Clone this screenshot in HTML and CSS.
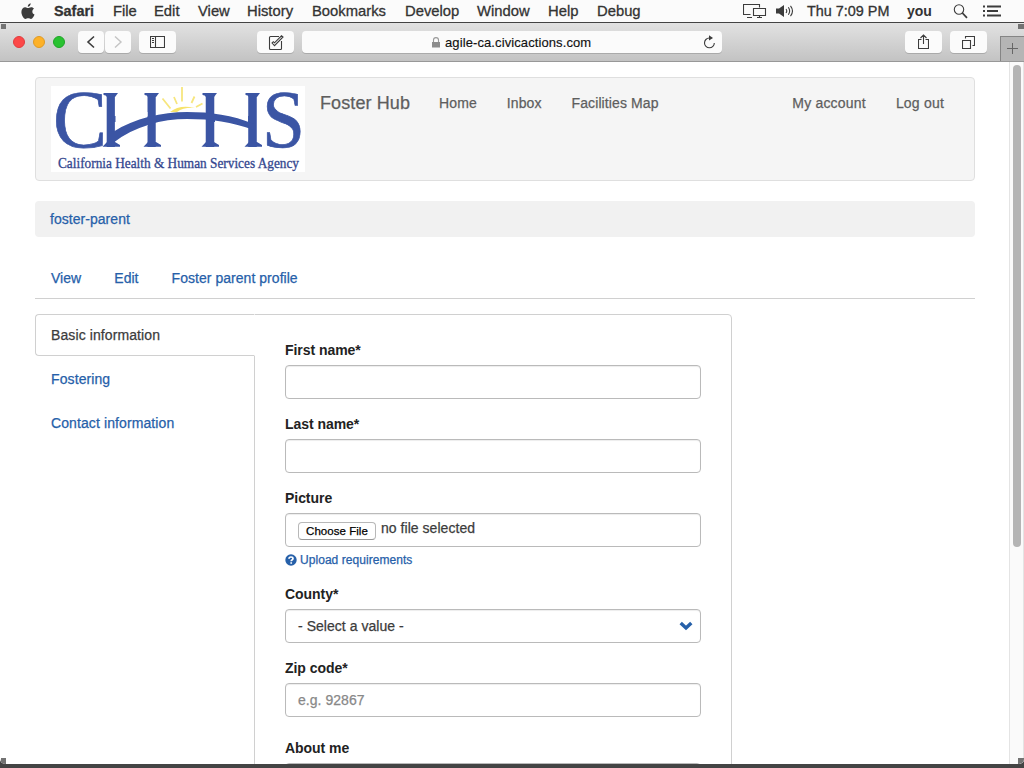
FILE: index.html
```html
<!DOCTYPE html>
<html lang="en">
<head>
<meta charset="utf-8">
<title>Foster Hub</title>
<link rel="stylesheet" href="styles.css">
</head>
<body>
<header class="menubar">
  <svg class="apple" width="14" height="17" viewBox="0 0 14 17"><path d="M9.7 0.3C9.8 2.2 8.300 3.700 6.800 3.700C6.600 2 8 .5 9.700 .3ZM7 5.100C7.700 5.100 8.600 4.200 10.200 4.200C11.500 4.200 12.500 4.900 13 5.700C10.600 7.100 10.900 10.500 13.500 11.500C12.900 13.200 11.500 15.900 10 15.900C8.900 15.900 8.500 15.300 7.200 15.300C5.900 15.300 5.400 15.900 4.400 15.900C2.600 15.900 .4 12.200 .4 9.100C.4 6 2.300 4.300 4.200 4.300C5.500 4.300 6.400 5.100 7 5.100Z"/></svg>
  <nav class="menus"><b>Safari</b><span>File</span><span>Edit</span><span>View</span><span>History</span><span>Bookmarks</span><span>Develop</span><span>Window</span><span>Help</span><span>Debug</span></nav>
  <div class="status">
    <svg class="screens" width="24" height="15" viewBox="0 0 24 15"><path d="M7.500 10.500H.5V.5H16.500V3.500M10.500 4.500H22.500V11.500H10.500ZM4 13.500H9M16.500 11.500V13.500M14 13.500H19"/></svg>
    <svg class="volume" width="18" height="14" viewBox="0 0 18 14"><path class="fill" d="M0 4.500H3L8 1V13L3 9.500H0Z"/><path d="M10 5Q11.500 7 10 9M12.300 3.300Q15 7 12.300 10.700M14.500 1.800Q18.500 7 14.500 12.200"/></svg>
    <span class="clock">Thu 7:09 PM</span>
    <b class="user">you</b>
    <svg class="search" width="15" height="15" viewBox="0 0 15 15"><circle cx="6" cy="5.500" r="4.700"/><path d="M9.400 9L14 13.800" stroke-width="1.800"/></svg>
    <svg class="list" width="18" height="12" viewBox="0 0 18 12"><path d="M0 1.500H2M4 1.500H18M0 6H2M4 6H15M0 10.500H2M4 10.500H18"/></svg>
  </div>
</header>
<div class="toolbar">
  <i class="light red"></i><i class="light amber"></i><i class="light green"></i>
  <span class="button nav-button back"><svg width="10" height="14" viewBox="0 0 10 14"><path d="M8 1.500L2 7L8 12.500"/></svg></span>
  <span class="button nav-button forward"><svg width="10" height="14" viewBox="0 0 10 14"><path d="M2 1.500L8 7L2 12.500"/></svg></span>
  <span class="button sidebar"><svg width="15" height="12" viewBox="0 0 15 12"><path d="M.5 .5H14.500V11.500H.5ZM5.500 .5V11.500M2 2.500H4M2 4.500H4M2 6.500H4"/></svg></span>
  <span class="button reader"><svg width="16" height="15" viewBox="0 0 16 15"><path d="M11 1.500H2.500Q1.500 1.500 1.500 2.500V13.500Q1.500 14.500 2.500 14.500H12.500Q13.500 14.500 13.500 13.500V6M4 8L6.500 10.700L15 2L13.500 .8L6.500 7.800L5.300 6.700Z"/></svg></span>
  <div class="address">
    <svg class="lock" width="8" height="11" viewBox="0 0 8 11"><path class="lock-body" d="M0 5H8V10.500H0Z"/><path class="shackle" d="M1.500 5V3Q1.500 .6 4 .6T6.500 3V5"/></svg>
    <span>agile-ca.civicactions.com</span>
    <svg class="reload" width="13" height="14" viewBox="0 0 13 14"><path d="M8.500 3H6.300A4.900 4.900 0 1 0 11.300 7.900"/><path d="M6 .3L10 3L6 5.500Z" class="fill"/></svg>
  </div>
  <span class="button share"><svg width="11" height="16" viewBox="0 0 11 16"><path d="M3.500 5.500H.5V14.500H10.500V5.500H7.500M5.500 10V1M2.500 4L5.500 1L8.500 4"/></svg></span>
  <span class="button tabs"><svg width="13" height="13" viewBox="0 0 13 13"><path d="M.5 4.500H8.500V12.500H.5ZM3.500 2.500V.5H12.500V9.500H10.500"/></svg></span>
  <span class="new-tab"><svg width="12" height="12" viewBox="0 0 12 12"><path d="M5.500 0V11M0 5.500H11"/></svg></span>
  <i class="corner top-left"></i><i class="corner top-right"></i>
</div>
<main class="viewport">
  <div class="page">
    <header class="navbar">
      <svg class="logo" width="254" height="86" viewBox="0 0 254 86">
        <rect width="254" height="86" fill="#fff"/>
        <g class="letters"><text x="2" y="60.500" textLength="54" lengthAdjust="spacingAndGlyphs">C</text><text class="pillars" x="48.500" y="60.700" textLength="63.400" lengthAdjust="spacingAndGlyphs">H</text><text class="pillars" x="147.300" y="60.700" textLength="66" lengthAdjust="spacingAndGlyphs">H</text><text x="211" y="60.500" textLength="43" lengthAdjust="spacingAndGlyphs">S</text></g>
        <path d="M64.500 26H96.500V40H64.500ZM164 26H197V40H164Z" fill="#fff"/>
        <g class="serifs">
          <path d="M52.500 7H67L64 11H56Q55 9 52.500 9ZM51.500 60.700L56 56H64L69 59V60.700Z"/>
          <path d="M93.500 7H108L105 11H97Q96 9 93.500 9ZM92.500 60.700L97 56H105L110 59V60.700Z"/>
          <path d="M151.500 7H166L163 11H155Q154 9 151.500 9ZM150.500 60.700L155 56H163L168 59V60.700Z"/>
          <path d="M194.500 7H209L206 11H198Q197 9 194.500 9ZM193.500 60.700L198 56H206L211 59V60.700Z"/>
        </g>
        <path d="M62 46C84 32 111 26 136 26C160 26 181 29 203 38V44C181 36 160 33 136 33C111 33 84 40 62 57Z" fill="#3b55a4"/>
        <path d="M119 26Q129 18 144 22Q133 21 126 26Z" fill="#f7e36b"/>
        <path d="M111.500 12.500L119.500 22.500M123 11L126 18M131 1V15.500M143.500 10.500L140.500 17M151.500 17.500L145 21" stroke="#f7e67e" stroke-width="1.800" fill="none"/>
        <text class="caption" x="7" y="82" textLength="241" lengthAdjust="spacingAndGlyphs">California Health &amp; Human Services Agency</text>
      </svg>
      <a class="brand">Foster Hub</a>
      <nav class="links"><a>Home</a><a>Inbox</a><a>Facilities Map</a></nav>
      <nav class="links account"><a>My account</a><a>Log out</a></nav>
    </header>
    <div class="breadcrumb"><a>foster-parent</a></div>
    <nav class="page-tabs"><a>View</a><a>Edit</a><a>Foster parent profile</a></nav>
    <div class="profile">
      <nav class="side-tabs"><a class="active">Basic information</a><a>Fostering</a><a>Contact information</a></nav>
      <form class="pane">
        <div class="field"><label>First name*</label><div class="control"></div></div>
        <div class="field"><label>Last name*</label><div class="control"></div></div>
        <div class="field"><label>Picture</label>
          <div class="control file"><span class="choose">Choose File</span><span class="file-name">no file selected</span></div>
          <a class="help"><svg width="12" height="12" viewBox="0 0 12 12"><circle cx="6" cy="6" r="5.700" fill="#2660a9"/><path d="M4 4.700Q4 3 6 3T8 4.600Q8 5.400 7 5.900Q6.200 6.300 6.200 7.300M6.200 8.300V9.800" stroke="#fff" stroke-width="1.700" fill="none"/></svg><span>Upload requirements</span></a>
        </div>
        <div class="field"><label>County*</label><div class="control select"><span>- Select a value -</span><svg width="14" height="10" viewBox="0 0 14 10"><path d="M1.700 2L7 7L12.300 2" stroke="#2660a9" stroke-width="3.400" fill="none"/></svg></div></div>
        <div class="field zip"><label>Zip code*</label><div class="control placeholder">e.g. 92867</div></div>
        <div class="field"><label>About me</label><div class="control area"></div></div>
      </form>
    </div>
  </div>
  <div class="scrollbar"><div class="thumb"></div></div>
  <i class="corner bottom-left"></i><i class="corner bottom-right"></i>
</main>
</body>
</html>
```

FILE: styles.css
```css
* { box-sizing: border-box; }
body {
  margin: 0;
  width: 1024px;
  height: 768px;
  overflow: hidden;
  display: flex;
  flex-direction: column;
  background: #444;
  font: 14px/20px "Liberation Sans", Arial, sans-serif;
  color: #3c3c3c;
}
svg { display: block; flex: none; }

.menubar {
  height: 23px;
  flex: none;
  display: flex;
  align-items: center;
  background: #fbfbfb;
  border-bottom: 1px solid #444;
  font-size: 14.8px;
  line-height: 22px;
  color: #333;
  -webkit-text-stroke: 0.3px;
}
.apple { margin-left: 21px; fill: #3c3c3c; }
.menus {
  margin-left: 19px;
  display: grid;
  grid-template-columns: 59px 41px 44px 49px 65px 93px 72px 71px 49px 50px;
}
.menus b { font-size: 14.4px; }
.status { margin-left: auto; display: flex; align-items: center; padding-right: 23px; }
.status svg, .toolbar svg { fill: none; stroke: #3c3c3c; stroke-width: 1.1; }
.status .fill, .toolbar .fill { fill: #3c3c3c; stroke: none; }
.toolbar .lock-body { fill: #8d8d8d; stroke: none; }
.toolbar .shackle { stroke: #999; }
.volume { margin-left: 9px; }
.clock { width: 100px; margin-left: 13px; font-size: 14.4px; white-space: nowrap; }
.user { width: 46px; font-size: 14px; -webkit-text-stroke: 0; }
.status .list { margin-left: 15px; stroke-width: 1.9; }

.toolbar {
  position: relative;
  height: 39px;
  flex: none;
  display: flex;
  align-items: center;
  padding: 0 0 0 13px;
  background: linear-gradient(#e2e2e2, #c3c3c3);
  border-bottom: 1px solid #989898;
}
.light { width: 12px; height: 12px; border-radius: 50%; margin-right: 8px; border: 1px solid; }
.red { background: #fc4848; border-color: #e03c3e; }
.amber { background: #fdb128; border-color: #df9a25; }
.green { background: #29c231; border-color: #1fa528; }
.button {
  width: 37px;
  height: 22px;
  display: flex;
  align-items: center;
  justify-content: center;
  background: #fbfbfb;
  border-radius: 4px;
  box-shadow: 0 1px 0 #aaa;
}
.nav-button { width: 26px; }
.back { margin-left: 5px; }
.forward { margin-left: 1px; }
.toolbar .back svg { stroke-width: 1.6; }
.toolbar .forward svg { stroke: #c4c4c4; stroke-width: 1.4; }
.sidebar { margin-left: 8px; }
.reader { margin-left: 81px; }
.address {
  width: 420px;
  height: 22px;
  margin-left: 8px;
  padding: 0 6px 0 130px;
  display: flex;
  align-items: center;
  background: #fbfbfb;
  border-radius: 4px;
  box-shadow: 0 1px 0 #aaa;
  font-size: 13px;
  line-height: 24px;
  letter-spacing: 0.1px;
  color: #111;
}
.address span { padding-top: 2px; -webkit-text-stroke: 0.15px; }
.lock { margin-right: 5px; }
.reload { margin-left: auto; }
.share { margin-left: 183px; }
.tabs { margin-left: 8px; }
.new-tab {
  width: 24px;
  height: 25px;
  margin-left: 13px;
  align-self: flex-end;
  display: flex;
  align-items: center;
  justify-content: center;
  background: #b5b5b5;
  border: 1px solid #858585;
  border-width: 1px 0 0 1px;
}
.toolbar .new-tab svg { stroke: #666; stroke-width: 1; }
.corner { position: absolute; width: 5px; height: 5px; background: #737373; }
.top-left { left: 1px; top: 1px; }
.top-right { right: 0; top: 1px; width: 6px; }
.bottom-left { left: 1px; bottom: 0; height: 6px; }
.bottom-right { right: 0; bottom: 0; width: 6px; height: 6px; }

.viewport {
  position: relative;
  height: 702px;
  flex: none;
  display: flex;
  overflow: hidden;
  background: #fff;
  border-radius: 0 0 5px 5px;
}
.page { width: 1009px; padding: 15px 34px 0 35px; letter-spacing: 0.1px; }
.navbar {
  height: 104px;
  display: flex;
  align-items: flex-start;
  padding: 8px 15px 0;
  background: #f5f5f5;
  border: 1px solid #dfdfdf;
  border-radius: 4px;
  color: #5e5e5e;
  -webkit-text-stroke: 0.25px;
}
.letters { font: 82px "Liberation Serif", serif; letter-spacing: 0; fill: #3b55a4; stroke: #3b55a4; stroke-width: 0.7; }
.pillars { font: 78px "Liberation Sans", sans-serif; stroke: none; -webkit-text-stroke: 0; }
.serifs { fill: #3b55a4; }
.caption { font: 14px "Liberation Serif", serif; letter-spacing: 0; fill: #34478f; stroke: #34478f; stroke-width: 0.3; }
.brand { margin: 7px 0 0 15px; font-size: 18px; white-space: nowrap; }
.links { display: flex; gap: 30px; margin: 7px 0 0 29px; white-space: nowrap; }
.account { margin-left: auto; padding-right: 15px; letter-spacing: 0.2px; }
.breadcrumb {
  height: 36px;
  margin-top: 20px;
  padding: 8px 15px;
  background: #f1f1f1;
  border-radius: 4px;
}
.breadcrumb, .page-tabs, .side-tabs, .help { color: #2660a9; -webkit-text-stroke: 0.25px; }
.breadcrumb, .page-tabs, .control { letter-spacing: 0.04px; }
.page-tabs {
  height: 42px;
  margin-top: 20px;
  padding: 11px 16px;
  display: flex;
  gap: 33px;
  border-bottom: 1px solid #d0d0d0;
}
.profile { display: flex; margin-top: 15px; }
.side-tabs {
  width: 220px;
  margin-right: -1px;
  position: relative;
  display: flex;
  flex-direction: column;
  gap: 2px;
}
.side-tabs a { height: 42px; padding: 10px 15px; border: 1px solid transparent; }
.side-tabs .active {
  color: #3c3c3c;
  background: #fff;
  border-color: #d0d0d0;
  border-right-color: #fff;
  border-radius: 4px 0 0 4px;
}
.pane {
  width: 478px;
  height: 500px;
  padding: 25px 30px 0;
  border: 1px solid #d0d0d0;
  border-radius: 0 4px 0 0;
}
.field { margin-bottom: 15px; }
label { display: block; margin-bottom: 5px; font-weight: bold; letter-spacing: -0.05px; color: #222; }
.control {
  height: 34px;
  padding: 6px 12px;
  border: 1px solid #bababa;
  border-radius: 4px;
  box-shadow: inset 0 1px 1px rgba(0, 0, 0, 0.075);
  -webkit-text-stroke: 0.25px;
}
.file { display: flex; padding-top: 4px; }
.choose {
  width: 78px;
  height: 18px;
  margin: 4px 5px 0 0;
  border: 1px solid #b8b8b8;
  border-bottom-color: #999;
  border-radius: 4px;
  font-size: 11.500px;
  line-height: 17px;
  text-align: center;
  color: #000;
}
.help { display: flex; align-items: center; gap: 3px; height: 17px; margin-top: 4px; margin-bottom: 16px; font-size: 12px; line-height: 17px; letter-spacing: 0.05px; }
.help span { padding-top: 2px; }
.select { display: flex; justify-content: space-between; align-items: center; padding-right: 7px; }
.placeholder { color: #888; }
.zip { margin-bottom: 21px; }
.area { height: 80px; }

.scrollbar { width: 15px; padding: 3px 3px 0; background: #fafafa; border-left: 1px solid #e4e4e4; border-right: 1px solid #e4e4e4; }
.thumb { width: 8px; height: 482px; background: #b4b4b4; border-radius: 4px; }
```
